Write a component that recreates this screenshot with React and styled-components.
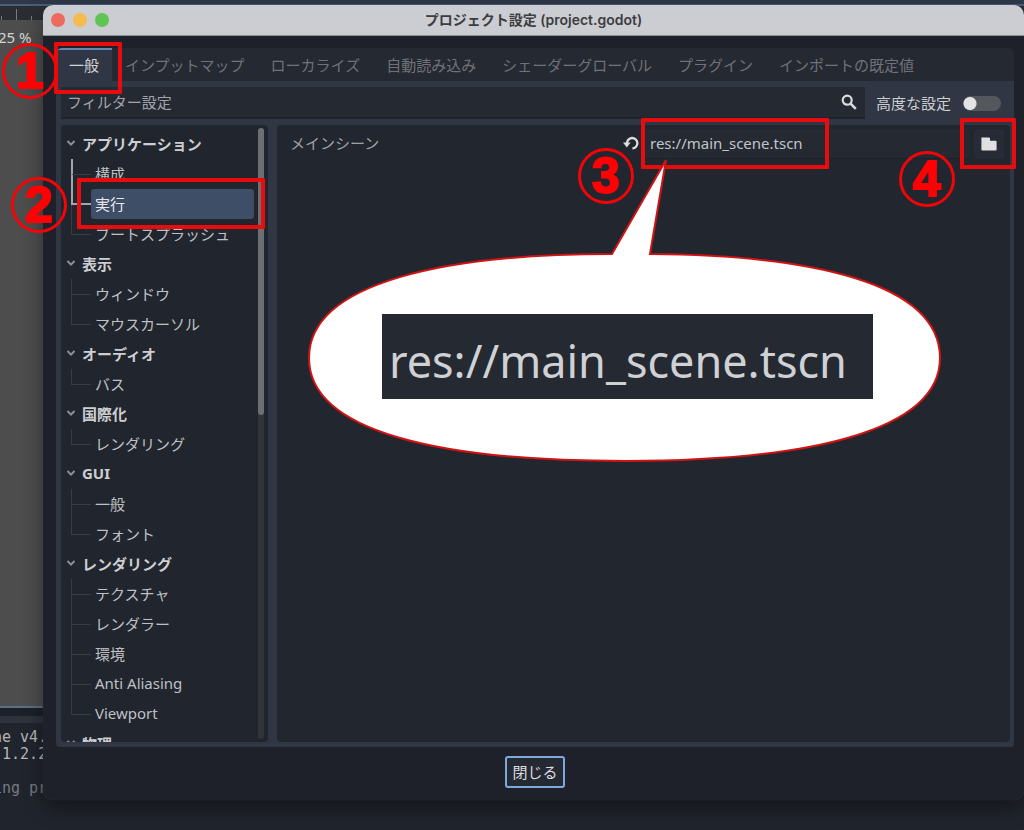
import React, { useState } from 'react';
import styled, { createGlobalStyle } from 'styled-components';

const TABS = [
    '一般',
    'インプットマップ',
    'ローカライズ',
    '自動読み込み',
    'シェーダーグローバル',
    'プラグイン',
    'インポートの既定値',
];

const GROUPS = [
    { name: 'アプリケーション', items: ['構成', '実行', 'ブートスプラッシュ'] },
    { name: '表示', items: ['ウィンドウ', 'マウスカーソル'] },
    { name: 'オーディオ', items: ['バス'] },
    { name: '国際化', items: ['レンダリング'] },
    { name: 'GUI', items: ['一般', 'フォント'] },
    { name: 'レンダリング', items: ['テクスチャ', 'レンダラー', '環境', 'Anti Aliasing', 'Viewport'] },
    { name: '物理', items: [] },
];

const FRAMES = [
    { left: 54, top: 42, width: 68, height: 52 },
    { left: 77, top: 178, width: 188, height: 51 },
    { left: 641, top: 118, width: 188, height: 51 },
    { left: 960, top: 118, width: 56, height: 51 },
];

const STEPS = [
    { label: '1', left: 2, top: 43 },
    { label: '2', left: 11, top: 177 },
    { label: '3', left: 578, top: 148 },
    { label: '4', left: 899, top: 151 },
];

const ChevronIcon = () => (
    <svg width="10" height="8" viewBox="0 0 10 8" fill="none" stroke="#8d9096" strokeWidth="2">
        <path d="M1.5 2 L5 5.6 L8.5 2" />
    </svg>
);

const SearchIcon = () => (
    <svg width="16" height="16" viewBox="0 0 16 16" fill="none" stroke="#d9dadd">
        <circle cx="6.2" cy="6.2" r="4.5" strokeWidth="2.2" />
        <path d="M9.6 9.6 L14.8 14.8" strokeWidth="2.6" />
    </svg>
);

const RevertIcon = () => (
    <svg width="16" height="16" viewBox="0 0 16 16">
        <path d="M4 8.6 A5.2 5.2 0 1 1 9.4 13.4" fill="none" stroke="#dcdde0" strokeWidth="2.3" />
        <path d="M0 7.6 H7.6 L3.8 12.4 Z" fill="#dcdde0" />
    </svg>
);

const FolderIcon = () => (
    <svg width="16" height="14" viewBox="0 0 16 14">
        <path d="M1.6 0.4 H8 a1 1 0 0 1 1 1 V3.8 H14.6 a1 1 0 0 1 1 1 V12.6 a1 1 0 0 1 -1 1 H1.4 a1 1 0 0 1 -1 -1 V1.4 a1 1 0 0 1 1.2 -1 Z" fill="#dfe0e2" />
    </svg>
);

const TreeGroup = ({ group, selected, onSelect }) => {
    const selectedIndex = group.items.findIndex((item) => `${group.name}/${item}` === selected);

    return (
        <li>
            <GroupHeader type="button">
                <ChevronIcon />
                {group.name}
            </GroupHeader>
            <List>
                {group.items.map((item, index) => (
                    <TreeRow key={item}>
                        <Branch>
                            <BranchTop
                                $lit={index <= selectedIndex}
                                $litArm={index === selectedIndex}
                            />
                            {index < group.items.length - 1 && <BranchBottom $lit={index < selectedIndex} />}
                        </Branch>
                        <TreeItem
                            type="button"
                            $active={index === selectedIndex}
                            onClick={() => onSelect(`${group.name}/${item}`)}
                        >
                            {item}
                        </TreeItem>
                    </TreeRow>
                ))}
            </List>
        </li>
    );
};

const Editor = () => (
    <EditorArea>
        <Ruler>
            <Tick $size={4} />
            <Tick $size={11} />
            <Tick $size={4} />
        </Ruler>
        <Viewport>25 %</Viewport>
        <Splitter />
        <Console>
            <ConsoleLine>ne v4.</ConsoleLine>
            <ConsoleLine>{' 1.2.2'}</ConsoleLine>
            <ConsoleLine />
            <ConsoleLine $dim>ing pr</ConsoleLine>
        </Console>
    </EditorArea>
);

const Annotations = () => (
    <Overlay>
        {FRAMES.map((frame) => (
            <Frame key={frame.left} $rect={frame} />
        ))}
        <Callout>
            <svg width="634" height="305" viewBox="308 158 634 305">
                <path
                    d="M666 160 L650 254 C805 255 940 281 940 358 C940 432 805 461 625 461 C440 461 309 432 309 358 C309 281 450 254 612 254 Z"
                    fill="#fff"
                    stroke="#d01414"
                    strokeWidth="2"
                />
            </svg>
            <CalloutText>res://main_scene.tscn</CalloutText>
        </Callout>
        {STEPS.map((step) => (
            <Step key={step.label} $left={step.left} $top={step.top}>{step.label}</Step>
        ))}
    </Overlay>
);

const App = () => {
    const [tab, setTab] = useState(TABS[0]);
    const [selected, setSelected] = useState('アプリケーション/実行');
    const [filter, setFilter] = useState('');
    const [advanced, setAdvanced] = useState(false);
    const [scene, setScene] = useState('res://main_scene.tscn');

    return (
        <Desktop>
            <GlobalStyle />
            <Editor />
            <Dialog>
                <TitleBar>
                    <Lights>
                        <Light $color="#ee6a5f" />
                        <Light $color="#f5bd4f" />
                        <Light $color="#5fc454" />
                    </Lights>
                    <Title>プロジェクト設定 (project.godot)</Title>
                </TitleBar>

                <Body>
                    <TabBar>
                        {TABS.map((name) => (
                            <Tab key={name} type="button" $active={name === tab} onClick={() => setTab(name)}>
                                {name}
                            </Tab>
                        ))}
                    </TabBar>

                    <Panel>
                        <FilterRow>
                            <FilterBox>
                                <FilterInput
                                    aria-label="フィルター設定"
                                    placeholder="フィルター設定"
                                    value={filter}
                                    onChange={(e) => setFilter(e.target.value)}
                                />
                                <SearchIcon />
                            </FilterBox>
                            <ToggleLabel>
                                <ToggleText>高度な設定</ToggleText>
                                <Toggle
                                    type="checkbox"
                                    checked={advanced}
                                    onChange={(e) => setAdvanced(e.target.checked)}
                                />
                            </ToggleLabel>
                        </FilterRow>

                        <Columns>
                            <TreePanel>
                                <Tree>
                                    {GROUPS.map((group) => (
                                        <TreeGroup
                                            key={group.name}
                                            group={group}
                                            selected={selected}
                                            onSelect={setSelected}
                                        />
                                    ))}
                                </Tree>
                                <ScrollTrack>
                                    <ScrollThumb />
                                </ScrollTrack>
                            </TreePanel>

                            <Inspector>
                                <Property>
                                    <PropertyName htmlFor="main-scene">メインシーン</PropertyName>
                                    <IconButton type="button" aria-label="revert"><RevertIcon /></IconButton>
                                    <PathInput
                                        id="main-scene"
                                        value={scene}
                                        onChange={(e) => setScene(e.target.value)}
                                    />
                                    <FolderButton type="button" aria-label="open"><FolderIcon /></FolderButton>
                                </Property>
                            </Inspector>
                        </Columns>
                    </Panel>

                    <Footer>
                        <CloseButton type="button">閉じる</CloseButton>
                    </Footer>
                </Body>
            </Dialog>
            <Annotations />
        </Desktop>
    );
};

export default App;

const GlobalStyle = createGlobalStyle`
    * {
        box-sizing: border-box;
    }

    body {
        margin: 0;
        background: #1c2028;
        color: #cdced2;
        font-family: 'Noto Sans', 'Noto Sans CJK JP', sans-serif;
        font-size: 15px;
    }

    button, input {
        margin: 0;
        padding: 0;
        border: 0;
        background: none;
        color: inherit;
        font: inherit;
        outline: none;
    }

    svg {
        display: block;
        flex: none;
    }
`;

const Desktop = styled.div`
    position: relative;
    display: grid;
    height: 100vh;
    overflow: hidden;
`;

/* editor window behind the dialog */
const EditorArea = styled.div`
    grid-area: 1 / 1;
    display: flex;
    flex-direction: column;
    min-height: 0;
    border-top: 4px solid #303848;
    background: #1d2129;
`;

const Ruler = styled.div`
    display: flex;
    align-items: flex-end;
    gap: 13px;
    height: 16px;
    border-top: 2px solid #46607d;
    background: #2b2d32;
`;

const Tick = styled.span`
    width: 1px;
    height: ${({ $size }) => $size}px;
    margin-left: 1px;
    background: #777a80;
`;

const Viewport = styled.div`
    flex: 1;
    padding: 7px 0 0;
    border-bottom: 2px solid #5a7086;
    background: #4d4d4d;
    color: #d5d5d5;
    text-indent: -2px;
`;

const Splitter = styled.div`
    height: 15px;
    border-top: 8px solid #1c2028;
    background: #2d323d;
`;

const Console = styled.div`
    height: 107px;
    padding-top: 6px;
    background: #20242c;
    font-family: 'DejaVu Sans Mono', monospace;
    font-size: 15px;
    line-height: 17px;
`;

const ConsoleLine = styled.div`
    height: 17px;
    margin-left: -7px;
    color: ${({ $dim }) => ($dim ? '#777a80' : '#b4b6ba')};
    white-space: pre;
`;

const Dialog = styled.section`
    grid-area: 1 / 1;
    display: flex;
    flex-direction: column;
    min-height: 0;
    margin: 5px 0 30px 43px;
    border-radius: 10px;
    overflow: hidden;
    background: #1e2129;
    box-shadow: 0 0 1px #4a4d52, 0 8px 20px rgba(0, 0, 0, 0.4);
`;

const TitleBar = styled.header`
    display: grid;
    grid-template-columns: 1fr auto 1fr;
    align-items: center;
    flex: none;
    height: 31px;
    padding: 0 8px;
    border-bottom: 1px solid #8e9096;
    background: #cccdd2;
`;

const Lights = styled.div`
    display: flex;
    gap: 8px;
`;

const Light = styled.span`
    width: 14px;
    height: 14px;
    border-radius: 50%;
    background: ${({ $color }) => $color};
`;

const Title = styled.h1`
    margin: 0;
    color: #3c3d41;
    font-family: Inter, 'Noto Sans CJK JP', sans-serif;
    font-size: 14px;
    font-weight: 600;
    line-height: 20px;
`;

const Body = styled.div`
    display: flex;
    flex: 1;
    flex-direction: column;
    min-height: 0;
    padding: 12px 10px 0 13px;
`;

const TabBar = styled.nav`
    display: flex;
    flex: none;
    height: 33px;
    border-radius: 6px 6px 0 0;
    overflow: hidden;
    background: #252932;
`;

const Tab = styled.button`
    padding: 0 13px 2px;
    border-top: 2px solid ${({ $active }) => ($active ? '#6787b0' : 'transparent')};
    background: ${({ $active }) => ($active ? '#303643' : 'transparent')};
    color: ${({ $active }) => ($active ? '#d3d4d8' : '#6f7278')};
    white-space: nowrap;
`;

const Panel = styled.main`
    display: flex;
    flex: 1;
    flex-direction: column;
    gap: 6px;
    min-height: 0;
    padding: 6px 4px 5px 5px;
    border-radius: 0 0 4px 4px;
    background: #303643;
`;

const FilterRow = styled.div`
    display: flex;
    align-items: center;
    gap: 11px;
    padding-right: 9px;
`;

const FilterBox = styled.div`
    display: flex;
    flex: 1;
    align-items: center;
    height: 32px;
    padding: 0 8px 0 6px;
    border-bottom: 2px solid #1f232b;
    background: #252932;
`;

const FilterInput = styled.input`
    flex: 1;
    min-width: 0;

    &::placeholder {
        color: #a2a4a9;
        opacity: 1;
    }
`;

const ToggleLabel = styled.label`
    display: flex;
    align-items: center;
    gap: 12px;
`;

const ToggleText = styled.span`
    padding-bottom: 2px;
`;

const Toggle = styled.input`
    width: 38px;
    height: 15px;
    border-radius: 8px;
    appearance: none;
    background: radial-gradient(circle at 7px 50%, #e3e3e4 6px, transparent 7px) #54575d;

    &:checked {
        background: radial-gradient(circle at 31px 50%, #e3e3e4 6px, transparent 7px) #6787b0;
    }
`;

const Columns = styled.div`
    display: flex;
    flex: 1;
    gap: 9px;
    min-height: 0;
`;

const TreePanel = styled.div`
    display: flex;
    flex: none;
    width: 207px;
    padding-right: 4px;
    border-radius: 4px;
    overflow: hidden;
    background: #21252d;
`;

const List = styled.ul`
    margin: 0;
    padding: 0;
    list-style: none;
`;

const Tree = styled(List)`
    flex: 1;
    padding: 4px 4px 0 5px;
    overflow: hidden;
`;

const GroupHeader = styled.button`
    display: flex;
    align-items: center;
    gap: 6px;
    height: 30px;
    padding-bottom: 2px;
    font-weight: 700;
`;

const TreeRow = styled.li`
    display: flex;
    height: 30px;
    padding-left: 5px;
`;

const Branch = styled.span`
    width: 20px;
`;

const BranchTop = styled.span`
    display: block;
    height: 16px;
    border-left: ${({ $lit }) => ($lit ? '2px solid #a3a6ab' : '1px solid #383c44')};
    border-bottom: ${({ $litArm }) => ($litArm ? '2px solid #a3a6ab' : '1px solid #383c44')};
`;

const BranchBottom = styled.span`
    display: block;
    height: 14px;
    border-left: ${({ $lit }) => ($lit ? '2px solid #a3a6ab' : '1px solid #383c44')};
`;

const TreeItem = styled.button`
    flex: 1;
    padding: 0 0 2px 4px;
    border-radius: 3px;
    background: ${({ $active }) => ($active ? '#3e4e66' : 'transparent')};
    color: ${({ $active }) => ($active ? '#e6e7ea' : '#bfc0c5')};
    text-align: left;
`;

const ScrollTrack = styled.div`
    width: 6px;
    margin: 3px 0;
    border-radius: 3px;
    background: #313439;
`;

const ScrollThumb = styled.div`
    height: 47%;
    border-radius: 3px;
    background: #6d6f73;
`;

const Inspector = styled.div`
    flex: 1;
    min-width: 0;
    padding: 4px 6px 0 13px;
    border-radius: 4px;
    background: #22262e;
`;

const Property = styled.div`
    display: flex;
    align-items: center;
`;

const PropertyName = styled.label`
    flex: 1;
    padding: 0 11px 4px 0;
    color: #9fa1a6;
`;

const IconButton = styled.button`
    padding: 0 3px 2px;
`;

const PathInput = styled.input`
    flex: 1;
    min-width: 0;
    height: 30px;
    padding: 0 0 2px 8px;
    border-bottom: 1px solid #1c2027;
    background: #242932;
    color: #c3c5ca;
`;

const FolderButton = styled.button`
    display: grid;
    place-items: center;
    width: 30px;
    height: 30px;
    margin-left: 5px;
    border-radius: 3px;
    background: #262b35;
`;

const Footer = styled.footer`
    display: flex;
    flex: none;
    justify-content: center;
    padding: 9px 0 12px;
`;

const CloseButton = styled.button`
    height: 32px;
    padding: 0 5px 2px;
    border: 2px solid #7fa9dc;
    border-radius: 3px;
    background: #252932;
    color: #dcdde0;
`;

/* red marks drawn on top of the window */
const Overlay = styled.div`
    position: absolute;
    inset: 0;
    pointer-events: none;
`;

const Frame = styled.span`
    position: absolute;
    left: ${({ $rect }) => $rect.left}px;
    top: ${({ $rect }) => $rect.top}px;
    width: ${({ $rect }) => $rect.width}px;
    height: ${({ $rect }) => $rect.height}px;
    border: 4px solid #e80c0e;
    border-radius: 1px;
`;

const Step = styled.span`
    position: absolute;
    left: ${({ $left }) => $left}px;
    top: ${({ $top }) => $top}px;
    display: grid;
    place-items: center;
    width: 56px;
    height: 56px;
    border: 3px solid #f20508;
    border-radius: 50%;
    color: #ff0004;
    font-family: 'Liberation Sans', sans-serif;
    font-size: 50px;
    font-weight: 700;
    line-height: 50px;
    -webkit-text-stroke: 2px #ff0004;
`;

const Callout = styled.div`
    position: absolute;
    left: 308px;
    top: 158px;
`;

const CalloutText = styled.div`
    position: absolute;
    left: 74px;
    top: 156px;
    width: 491px;
    height: 85px;
    padding-left: 7px;
    background: #252932;
    color: #cfd1d5;
    font-size: 45px;
    line-height: 94px;
`;
